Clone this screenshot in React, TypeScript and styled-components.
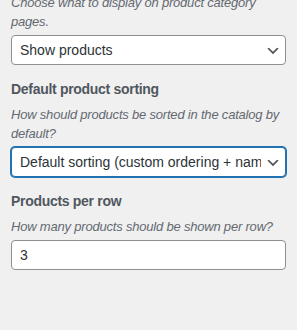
import React from "react"
import styled, { createGlobalStyle } from "styled-components"

const GlobalStyle = createGlobalStyle`
  html, body {
    margin: 0;
    padding: 0;
    background: #f0f0f1;
  }
  body {
    font-family: "Liberation Sans", Arial, sans-serif;
    color: #50575e;
  }
`

const Panel = styled.div`
  width: 297px;
  height: 330px;
  overflow: hidden;
  box-sizing: border-box;
  padding: 0 11px;
`

// the sidebar is scrolled a little, so the first line is cut at the top
const Scroller = styled.div`
  margin-top: -7px;
`

const Control = styled.div`
  margin-bottom: 12px;
`

const Title = styled.span`
  display: block;
  font-size: 14px;
  font-weight: 600;
  line-height: 24px;
  letter-spacing: -0.3px;
  margin-bottom: 4px;
  color: #50575e;
`

const Description = styled.span`
  display: block;
  font-size: 13px;
  font-style: italic;
  line-height: 19px;
  letter-spacing: -0.2px;
  color: #646970;
  margin-bottom: 4px;
`

const SelectWrap = styled.div`
  position: relative;
`

const Select = styled.select<{ $focused?: boolean }>`
  appearance: none;
  -webkit-appearance: none;
  display: block;
  width: 100%;
  box-sizing: border-box;
  height: 30px;
  margin: 0;
  padding: 0 24px 0 8px;
  font-family: inherit;
  font-size: 14px;
  line-height: 2;
  color: #2c3338;
  background: #fff;
  border: 1px solid ${({ $focused }) => ($focused ? "#2271b1" : "#8c8f94")};
  border-radius: 4px;
  box-shadow: ${({ $focused }) => ($focused ? "0 0 0 1px #2271b1" : "none")};
  outline: none;
  white-space: nowrap;
  overflow: hidden;
  text-overflow: clip;
`

const Chevron = styled.svg`
  position: absolute;
  right: 5px;
  top: 8px;
  width: 16px;
  height: 16px;
  pointer-events: none;
`

const TextInput = styled.input`
  display: block;
  width: 100%;
  box-sizing: border-box;
  height: 30px;
  margin: 0;
  padding: 0 8px;
  font-family: inherit;
  font-size: 14px;
  color: #2c3338;
  background: #fff;
  border: 1px solid #8c8f94;
  border-radius: 4px;
  outline: none;
`

const Arrow = () => (
  <Chevron viewBox="0 0 20 20">
    <path d="M5 6l5 5 5-5 2 1-7 7-7-7 2-1z" fill="#555" />
  </Chevron>
)

const Dropdown = ({ options, focused }: { options: string[]; focused?: boolean }) => (
  <SelectWrap>
    <Select $focused={focused} defaultValue={options[0]}>
      {options.map((o) => (
        <option key={o}>{o}</option>
      ))}
    </Select>
    <Arrow />
  </SelectWrap>
)

export default function App() {
  return (
    <>
      <GlobalStyle />
      <Panel>
        <Scroller>
          <Control>
            <Description>Choose what to display on product category pages.</Description>
            <Dropdown options={["Show products", "Show categories", "Show categories & products"]} />
          </Control>
          <Control>
            <Title>Default product sorting</Title>
            <Description>How should products be sorted in the catalog by default?</Description>
            <Dropdown
              focused
              options={[
                "Default sorting (custom ordering + name)",
                "Popularity (sales)",
                "Average rating",
                "Sort by most recent",
              ]}
            />
          </Control>
          <Control>
            <Title>Products per row</Title>
            <Description>How many products should be shown per row?</Description>
            <TextInput type="text" defaultValue="3" />
          </Control>
        </Scroller>
      </Panel>
    </>
  )
}
